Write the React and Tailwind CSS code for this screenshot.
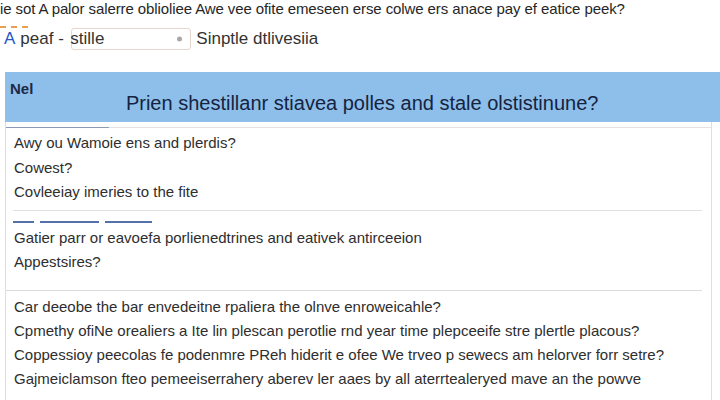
export default function App() {
  const topLines = [
    'Awy ou Wamoie ens and plerdis?',
    'Cowest?',
    'Covleeiay imeries to the fite',
  ]
  const midLines = [
    'Gatier parr or eavoefa porlienedtrines and eativek antirceeion',
    'Appestsires?',
  ]
  const bottomLines = [
    'Car deeobe the bar envedeitne rpaliera the olnve enroweicahle?',
    'Cpmethy ofiNe orealiers a Ite lin plescan perotlie rnd year time plepceeife stre plertle placous?',
    'Coppessioy peecolas fe podenmre PReh hiderit e ofee We trveo p sewecs am helorver forr setre?',
    'Gajmeiclamson fteo pemeeiserrahery aberev ler aaes by all aterrtealeryed mave an the powve',
    'aaa',
  ]

  return (
    <div className="w-[720px] h-[400px] overflow-hidden bg-white font-['Liberation_Sans',Arial,sans-serif] text-[#262626]">
      <p className="text-[15px] leading-[18px] whitespace-nowrap tracking-[-0.1px]">
        ie sot A palor salerre oblioliee Awe vee ofite emeseen erse colwe ers anace pay ef eatice peek?
      </p>

      <div className="h-[10px] flex items-end">
        <div className="w-7 border-t-2 border-dashed border-[#e8a050]" />
      </div>

      {/* filter row */}
      <div className="flex items-center h-[22px] text-[17px] text-[#333]">
        <span className="ml-[4px] text-[#2456c8]">A</span>
        <span className="ml-[5px] w-[51px]">peaf -</span>
        <div className="relative w-[120px] h-[22px] border border-[#e6d6ce] rounded-[3px] flex items-center">
          <span className="-ml-[2px]">stille</span>
          <span className="absolute right-[8px] top-1/2 -translate-y-1/2 w-[5px] h-[5px] rounded-full bg-[#a8a8a8]" />
        </div>
        <span className="ml-[5px]">Sinptle dtlivesiia</span>
      </div>

      {/* card */}
      <div className="ml-[5px] mt-[22px]">
        <div className="h-[50px] bg-[#8dbfea] flex">
          <span className="pl-[5px] pt-[6px] text-[15px] font-bold text-[#1d2a44]">Nel</span>
          <h2 className="flex-1 pr-[29px] pt-[16px] text-center text-[20px] text-[#15233f]">
            Prien shestillanr stiavea polles and stale olstistinune?
          </h2>
        </div>

        <div className="w-[707px] border-l border-r border-[#dedede]">
          <div className="h-[5px]" />
          <div className="flex h-px">
            <div className="w-[103px] bg-[#8c9ab6]" />
            <div className="flex-1 bg-[#e2e2e2]" />
          </div>

          <div className="pl-[8px] pt-[3px] text-[15px] leading-[24.5px] text-[#2e2e2e]">
            {topLines.map(t => (
              <p key={t}>{t}</p>
            ))}
          </div>

          <div className="ml-[7px] mr-[9px] mt-[5px] h-px bg-[#e0e0e0]" />
          <div className="ml-[7px] mt-[10px] flex gap-[6px]">
            <div className="w-[21px] h-[2px] bg-[#5571aa]" />
            <div className="w-[59px] h-[2px] bg-[#5571aa]" />
            <div className="w-[47px] h-[2px] bg-[#5571aa]" />
          </div>

          <div className="pl-[8px] pt-[3px] text-[15px] leading-[24.5px] text-[#2e2e2e]">
            {midLines.map(t => (
              <p key={t}>{t}</p>
            ))}
          </div>

          <div className="mr-[9px] mt-[15px] h-px bg-[#dcdcdc]" />

          <div className="pl-[8px] pt-[4px] text-[15px] leading-[24px] text-[#2e2e2e]">
            {bottomLines.map(t => (
              <p key={t} className="whitespace-nowrap">{t}</p>
            ))}
          </div>
        </div>
      </div>
    </div>
  )
}
